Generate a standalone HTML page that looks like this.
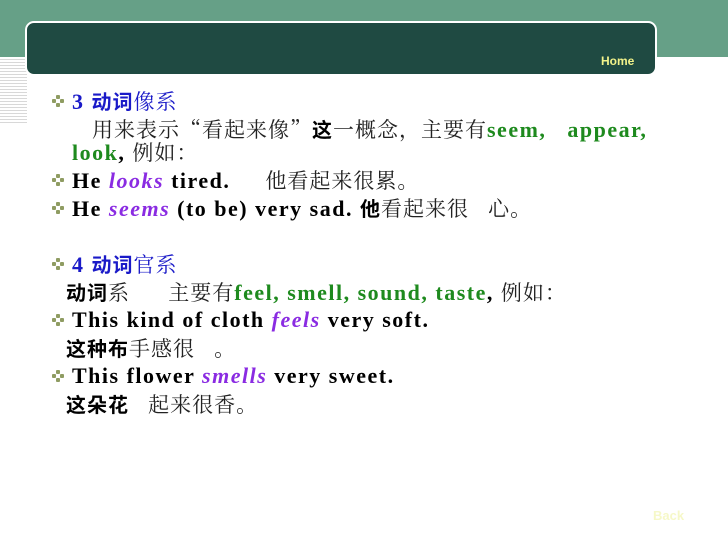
<!DOCTYPE html>
<html><head><meta charset="utf-8"><style>
body{margin:0;width:728px;height:546px;position:relative;overflow:hidden;background:#fff;font-family:"Liberation Serif","Noto Serif CJK SC",serif;}
.band{position:absolute;left:0;top:0;width:728px;height:57px;background:#66a087;}
.stripes{position:absolute;left:0;top:57px;width:27px;height:68px;background:repeating-linear-gradient(#fff 0 2px,#d8d8d8 2px 3px);}
.box{position:absolute;left:25px;top:21px;width:628px;height:51px;background:#1f4a42;border:2px solid #fff;border-radius:9px;}
.home{position:absolute;left:601px;top:54px;font:bold 12px "Liberation Sans",sans-serif;color:#f3f38a;}
.l{position:absolute;font-size:22px;letter-spacing:1.5px;white-space:nowrap;line-height:24px;color:#000;}
.b{font-weight:bold}
.blue{color:#1a1ac8}
.g{color:#1e8a1e;font-weight:bold}
.p{color:#8a2be2;font-weight:bold;font-style:italic}
.cj{font-family:"Noto Serif CJK SC",serif;font-weight:normal;color:#222;font-size:21px;letter-spacing:1px}
.cb{font-family:"Noto Sans CJK SC",sans-serif;font-weight:bold;font-size:20px;letter-spacing:1px}
.bul{position:absolute;width:12px;height:12px;}
.bul i{position:absolute;width:4px;height:4px;background:#8f9c62;border-radius:1px}
.back{position:absolute;left:653px;top:508px;font:bold 13px "Liberation Sans",sans-serif;color:#f6f8c8;}
</style></head><body>
<div class="band"></div><div class="stripes"></div>
<div class="box"></div><div class="home">Home</div>

<div class="bul" style="left:52px;top:95px"><i style="left:4px;top:0"></i><i style="left:0;top:4px"></i><i style="left:8px;top:4px"></i><i style="left:4px;top:8px"></i></div>
<div class="l b blue" style="left:72px;top:89px">3 <span class="cb">动词</span><span class="cj" style="color:#1a1ac8">像系</span></div>
<div class="l" style="left:92px;top:117px"><span class="cj">用来表示“看起来像”</span><span class="cb">这</span><span class="cj">一概念，主要有</span><span class="g">seem,&nbsp;&nbsp; appear,</span></div>
<div class="l" style="left:72px;top:140px"><span class="g">look</span><b>,</b> <span class="cj">例如：</span></div>
<div class="bul" style="left:52px;top:174px"><i style="left:4px;top:0"></i><i style="left:0;top:4px"></i><i style="left:8px;top:4px"></i><i style="left:4px;top:8px"></i></div>
<div class="l b" style="left:72px;top:168px">He <span class="p">looks</span> tired. &nbsp;&nbsp;&nbsp;&nbsp;<span class="cj">他看起来很累。</span></div>
<div class="bul" style="left:52px;top:202px"><i style="left:4px;top:0"></i><i style="left:0;top:4px"></i><i style="left:8px;top:4px"></i><i style="left:4px;top:8px"></i></div>
<div class="l b" style="left:72px;top:196px">He <span class="p">seems</span> (to be) very sad. <span class="cb">他</span><span class="cj">看起来很&nbsp;&nbsp; 心。</span></div>

<div class="bul" style="left:52px;top:258px"><i style="left:4px;top:0"></i><i style="left:0;top:4px"></i><i style="left:8px;top:4px"></i><i style="left:4px;top:8px"></i></div>
<div class="l b blue" style="left:72px;top:252px">4 <span class="cb">动词</span><span class="cj" style="color:#1a1ac8">官系</span></div>
<div class="l" style="left:66px;top:280px"><span class="cb">动词</span><span class="cj">系&nbsp;&nbsp;&nbsp;&nbsp;&nbsp; 主要有</span><span class="g">feel, smell, sound, taste</span><b>,</b> <span class="cj">例如：</span></div>
<div class="bul" style="left:52px;top:314px"><i style="left:4px;top:0"></i><i style="left:0;top:4px"></i><i style="left:8px;top:4px"></i><i style="left:4px;top:8px"></i></div>
<div class="l b" style="left:72px;top:308px">This kind of cloth <span class="p">feels</span> very soft.</div>
<div class="l" style="left:66px;top:336px"><span class="cb">这种布</span><span class="cj">手感很&nbsp;&nbsp; 。</span></div>
<div class="bul" style="left:52px;top:370px"><i style="left:4px;top:0"></i><i style="left:0;top:4px"></i><i style="left:8px;top:4px"></i><i style="left:4px;top:8px"></i></div>
<div class="l b" style="left:72px;top:364px">This flower <span class="p">smells</span> very sweet.</div>
<div class="l" style="left:66px;top:392px"><span class="cb">这朵花</span><span class="cj">&nbsp;&nbsp; 起来很香。</span></div>

<div class="back">Back</div>
</body></html>
